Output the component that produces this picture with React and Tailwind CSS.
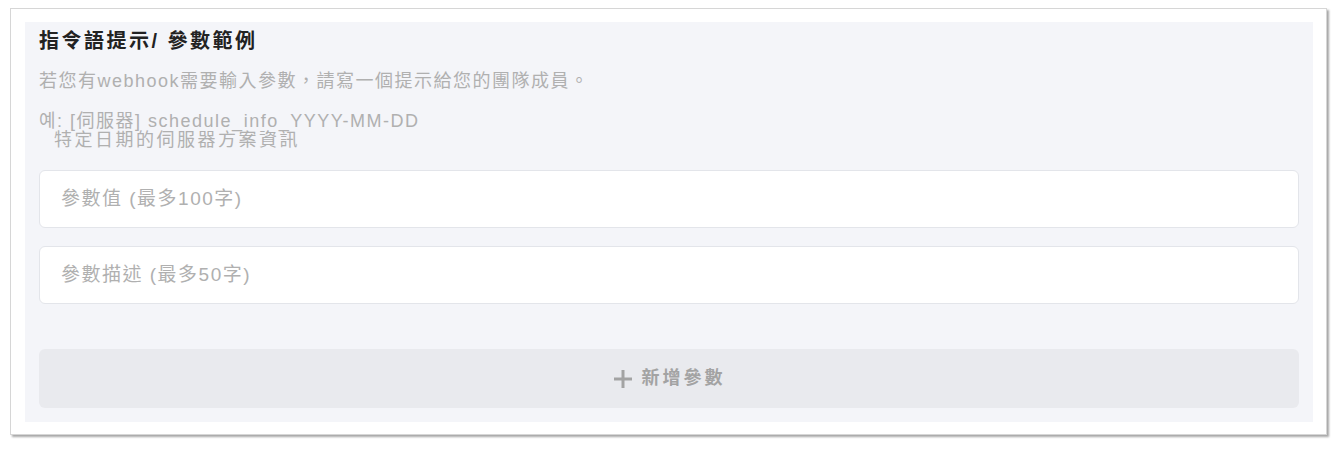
const FONT = "font-['Liberation_Sans','Noto_Sans_CJK_TC','Noto_Sans_CJK_KR',sans-serif]";

const ParamInput = ({ placeholder }) => (
  <input
    type="text"
    placeholder={placeholder}
    className="w-full h-[58px] px-[21px] bg-white border border-[#e3e5ea] rounded-[6px] text-[19px] tracking-[1.5px] text-[#333] placeholder:text-[#b0b0b0] focus:outline-none"
  />
);

const PlusIcon = () => (
  <svg width="20" height="20" viewBox="0 0 20 20" fill="none" stroke="currentColor" strokeWidth="3">
    <path d="M10 1v18M1 10h18" />
  </svg>
);

const App = () => {
  return (
    <div className={`min-h-[450px] bg-white pt-[8px] pl-[10px] ${FONT}`}>
      {/* outer frame */}
      <div className="w-[1317px] h-[427px] bg-white border border-[#d6d6d6] shadow-[2px_2px_2px_rgba(0,0,0,0.35)] pt-[13px] pl-[14px]">
        {/* panel */}
        <div className="w-[1288px] h-[400px] bg-[#f4f5f9] px-[14px] pt-[7px]">
          <h2 className="text-[20px] leading-[24px] font-bold tracking-[2.5px] text-[#222]">指令語提示/ 參數範例</h2>
          <p className="mt-[17px] text-[18px] leading-[22px] tracking-[1.5px] text-[#b0b0b0]">
            若您有webhook需要輸入參數，請寫一個提示給您的團隊成員。
          </p>
          <div className="mt-[20px] text-[18px] leading-[19px] tracking-[1.5px] text-[#b0b0b0]">
            <p>예: [伺服器] schedule_info_YYYY-MM-DD</p>
            <p className="pl-[15px] tracking-[2.5px]">特定日期的伺服器方案資訊</p>
          </div>

          <div className="mt-[20px] flex flex-col gap-[18px]">
            <ParamInput placeholder="參數值 (最多100字)" />
            <ParamInput placeholder="參數描述 (最多50字)" />
          </div>

          <button
            type="button"
            className="mt-[45px] w-full h-[59px] rounded-[6px] bg-[#e9eaee] flex items-center justify-center gap-[9px] text-[#a3a3a3]"
          >
            <PlusIcon />
            <span className="text-[18px] font-bold tracking-[3px]">新增參數</span>
          </button>
        </div>
      </div>
    </div>
  );
};

export default App;
